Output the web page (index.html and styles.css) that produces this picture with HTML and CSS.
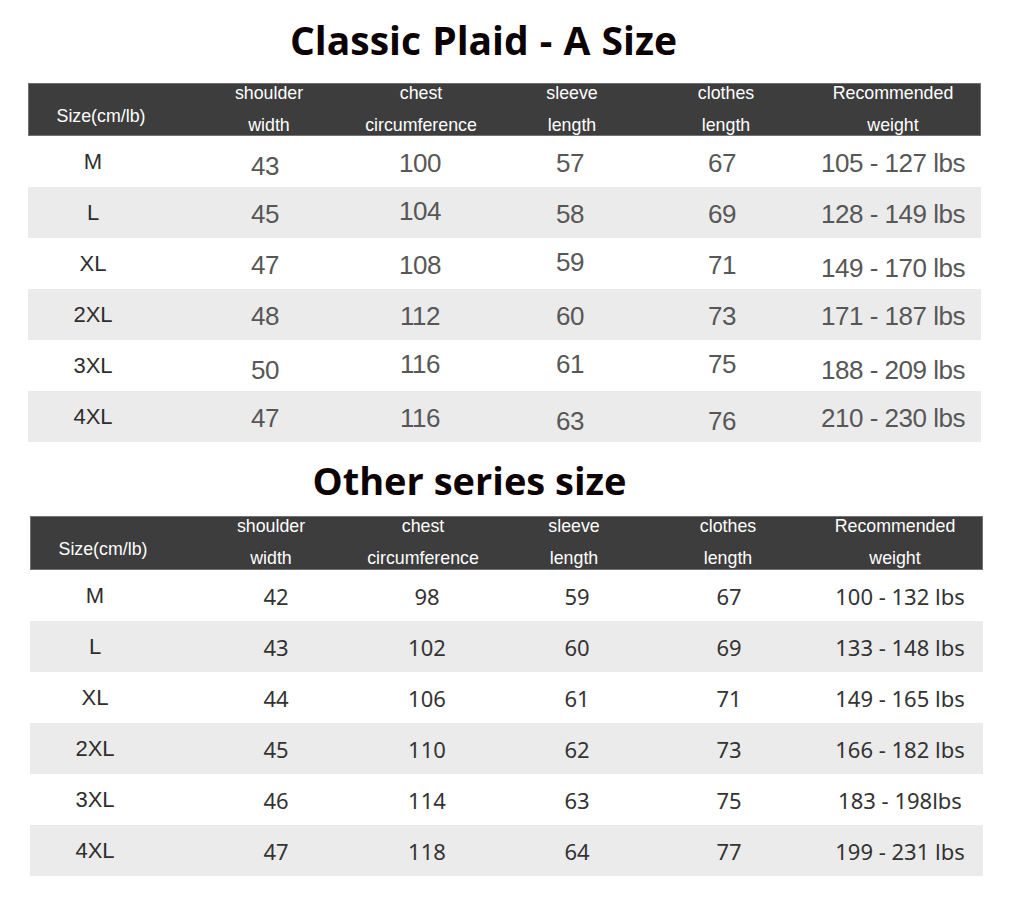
FILE: index.html
```html
<!DOCTYPE html>
<html lang="en">
<head>
<meta charset="utf-8">
<title>Size chart</title>
<link rel="stylesheet" href="styles.css">
</head>
<body>
<main class="sheet">
  <h1 class="title title-a">Classic Plaid - A Size</h1>
  <section class="chart chart-a">
    <div class="head">
      <div class="hc hc-size"><span>Size(cm/lb)</span></div>
      <div class="hc"><span>shoulder</span><span>width</span></div>
      <div class="hc"><span>chest</span><span>circumference</span></div>
      <div class="hc"><span>sleeve</span><span>length</span></div>
      <div class="hc"><span>clothes</span><span>length</span></div>
      <div class="hc hc-last"><span>Recommended</span><span>weight</span></div>
    </div>
    <div class="row"><div class="c sz">M</div><div class="c dn">43</div><div class="c">100</div><div class="c">57</div><div class="c">67</div><div class="c wt">105 - 127 lbs</div></div>
    <div class="row alt"><div class="c sz">L</div><div class="c">45</div><div class="c up">104</div><div class="c">58</div><div class="c">69</div><div class="c wt">128 - 149 lbs</div></div>
    <div class="row"><div class="c sz">XL</div><div class="c">47</div><div class="c">108</div><div class="c up">59</div><div class="c">71</div><div class="c wt dn">149 - 170 lbs</div></div>
    <div class="row alt"><div class="c sz">2XL</div><div class="c">48</div><div class="c">112</div><div class="c">60</div><div class="c">73</div><div class="c wt">171 - 187 lbs</div></div>
    <div class="row"><div class="c sz">3XL</div><div class="c dn">50</div><div class="c up">116</div><div class="c up">61</div><div class="c up">75</div><div class="c wt dn">188 - 209 lbs</div></div>
    <div class="row alt"><div class="c sz">4XL</div><div class="c">47</div><div class="c">116</div><div class="c dn">63</div><div class="c dn">76</div><div class="c wt">210 - 230 lbs</div></div>
  </section>

  <h2 class="title title-b">Other series size</h2>
  <section class="chart chart-b">
    <div class="head">
      <div class="hc hc-size"><span>Size(cm/lb)</span></div>
      <div class="hc"><span>shoulder</span><span>width</span></div>
      <div class="hc"><span>chest</span><span>circumference</span></div>
      <div class="hc"><span>sleeve</span><span>length</span></div>
      <div class="hc"><span>clothes</span><span>length</span></div>
      <div class="hc hc-last"><span>Recommended</span><span>weight</span></div>
    </div>
    <div class="row"><div class="c sz">M</div><div class="c">42</div><div class="c">98</div><div class="c">59</div><div class="c">67</div><div class="c wt">100 - 132 lbs</div></div>
    <div class="row alt"><div class="c sz">L</div><div class="c">43</div><div class="c">102</div><div class="c">60</div><div class="c">69</div><div class="c wt">133 - 148 lbs</div></div>
    <div class="row"><div class="c sz">XL</div><div class="c">44</div><div class="c">106</div><div class="c">61</div><div class="c">71</div><div class="c wt">149 - 165 lbs</div></div>
    <div class="row alt"><div class="c sz">2XL</div><div class="c">45</div><div class="c">110</div><div class="c">62</div><div class="c">73</div><div class="c wt">166 - 182 lbs</div></div>
    <div class="row"><div class="c sz">3XL</div><div class="c">46</div><div class="c">114</div><div class="c">63</div><div class="c">75</div><div class="c wt">183 - 198lbs</div></div>
    <div class="row alt"><div class="c sz">4XL</div><div class="c">47</div><div class="c">118</div><div class="c">64</div><div class="c">77</div><div class="c wt">199 - 231 lbs</div></div>
  </section>
</main>
</body>
</html>
```

FILE: styles.css
```css
html, body {
  margin: 0;
  padding: 0;
  background: #ffffff;
}

.sheet {
  width: 1021px;
  padding-top: 16px;
  font-family: "Liberation Sans", Arial, sans-serif;
}

.title {
  margin: 0;
  font-family: "Open Sans", "Noto Sans", sans-serif;
  font-weight: 700;
  color: #0c0204;
  text-align: center;
}

.title-a {
  font-size: 39px;
  line-height: 48px;
  padding-right: 54px;
  word-spacing: 1px;
}

.title-b {
  font-size: 38px;
  line-height: 46px;
  padding-right: 82px;
  margin-top: 15px;
}

.chart {
  width: 953px;
}

.chart-a {
  margin: 19px 0 0 28px;
}

.chart-b {
  margin: 13px 0 0 30px;
}

/* header bar */
.head {
  display: grid;
  grid-template-columns: 144px 192px 112px 190px 118px 197px;
  height: 53px;
  box-sizing: border-box;
  background: #3d3d3d;
  border: 1px solid #727272;
  color: #ffffff;
  font-size: 17.8px;
}

.chart-b .head {
  height: 54px;
}

.hc {
  display: flex;
  flex-direction: column;
  align-items: center;
  gap: 14px;
  min-width: 0;
}

.hc span {
  display: block;
  line-height: 18px;
  white-space: nowrap;
}

.hc-size {
  justify-content: center;
  padding-top: 12px;
}

.hc-last {
  padding-left: 19px;
}

/* body rows */
.row {
  display: grid;
  height: 51px;
  background: #ffffff;
}

.row.alt {
  background: #ebebeb;
}

.chart-a .row {
  grid-template-columns: 130px 214px 96px 204px 100px 209px;
}

.chart-b .row {
  grid-template-columns: 130px 232px 70px 230px 74px 217px;
}

.c {
  display: flex;
  justify-content: center;
  align-items: center;
  min-width: 0;
  white-space: nowrap;
}

.chart-a .c {
  font-size: 26px;
  letter-spacing: -0.5px;
  color: #575757;
  padding-top: 4px;
}

.chart-a .c.up {
  padding-top: 0;
  padding-bottom: 2px;
}

.chart-a .c.dn {
  padding-top: 10px;
}

.chart-a .c.wt {
  padding-left: 33px;
}

.chart-b .c {
  font-family: "Noto Sans", "Open Sans", sans-serif;
  font-size: 22px;
  color: #333333;
}

.chart-b .c.wt {
  padding-left: 51px;
}

.chart .c.sz {
  font-family: "Liberation Sans", Arial, sans-serif;
  font-size: 22px;
  letter-spacing: 0;
  color: #2e2e2e;
  padding-top: 0;
}
```
